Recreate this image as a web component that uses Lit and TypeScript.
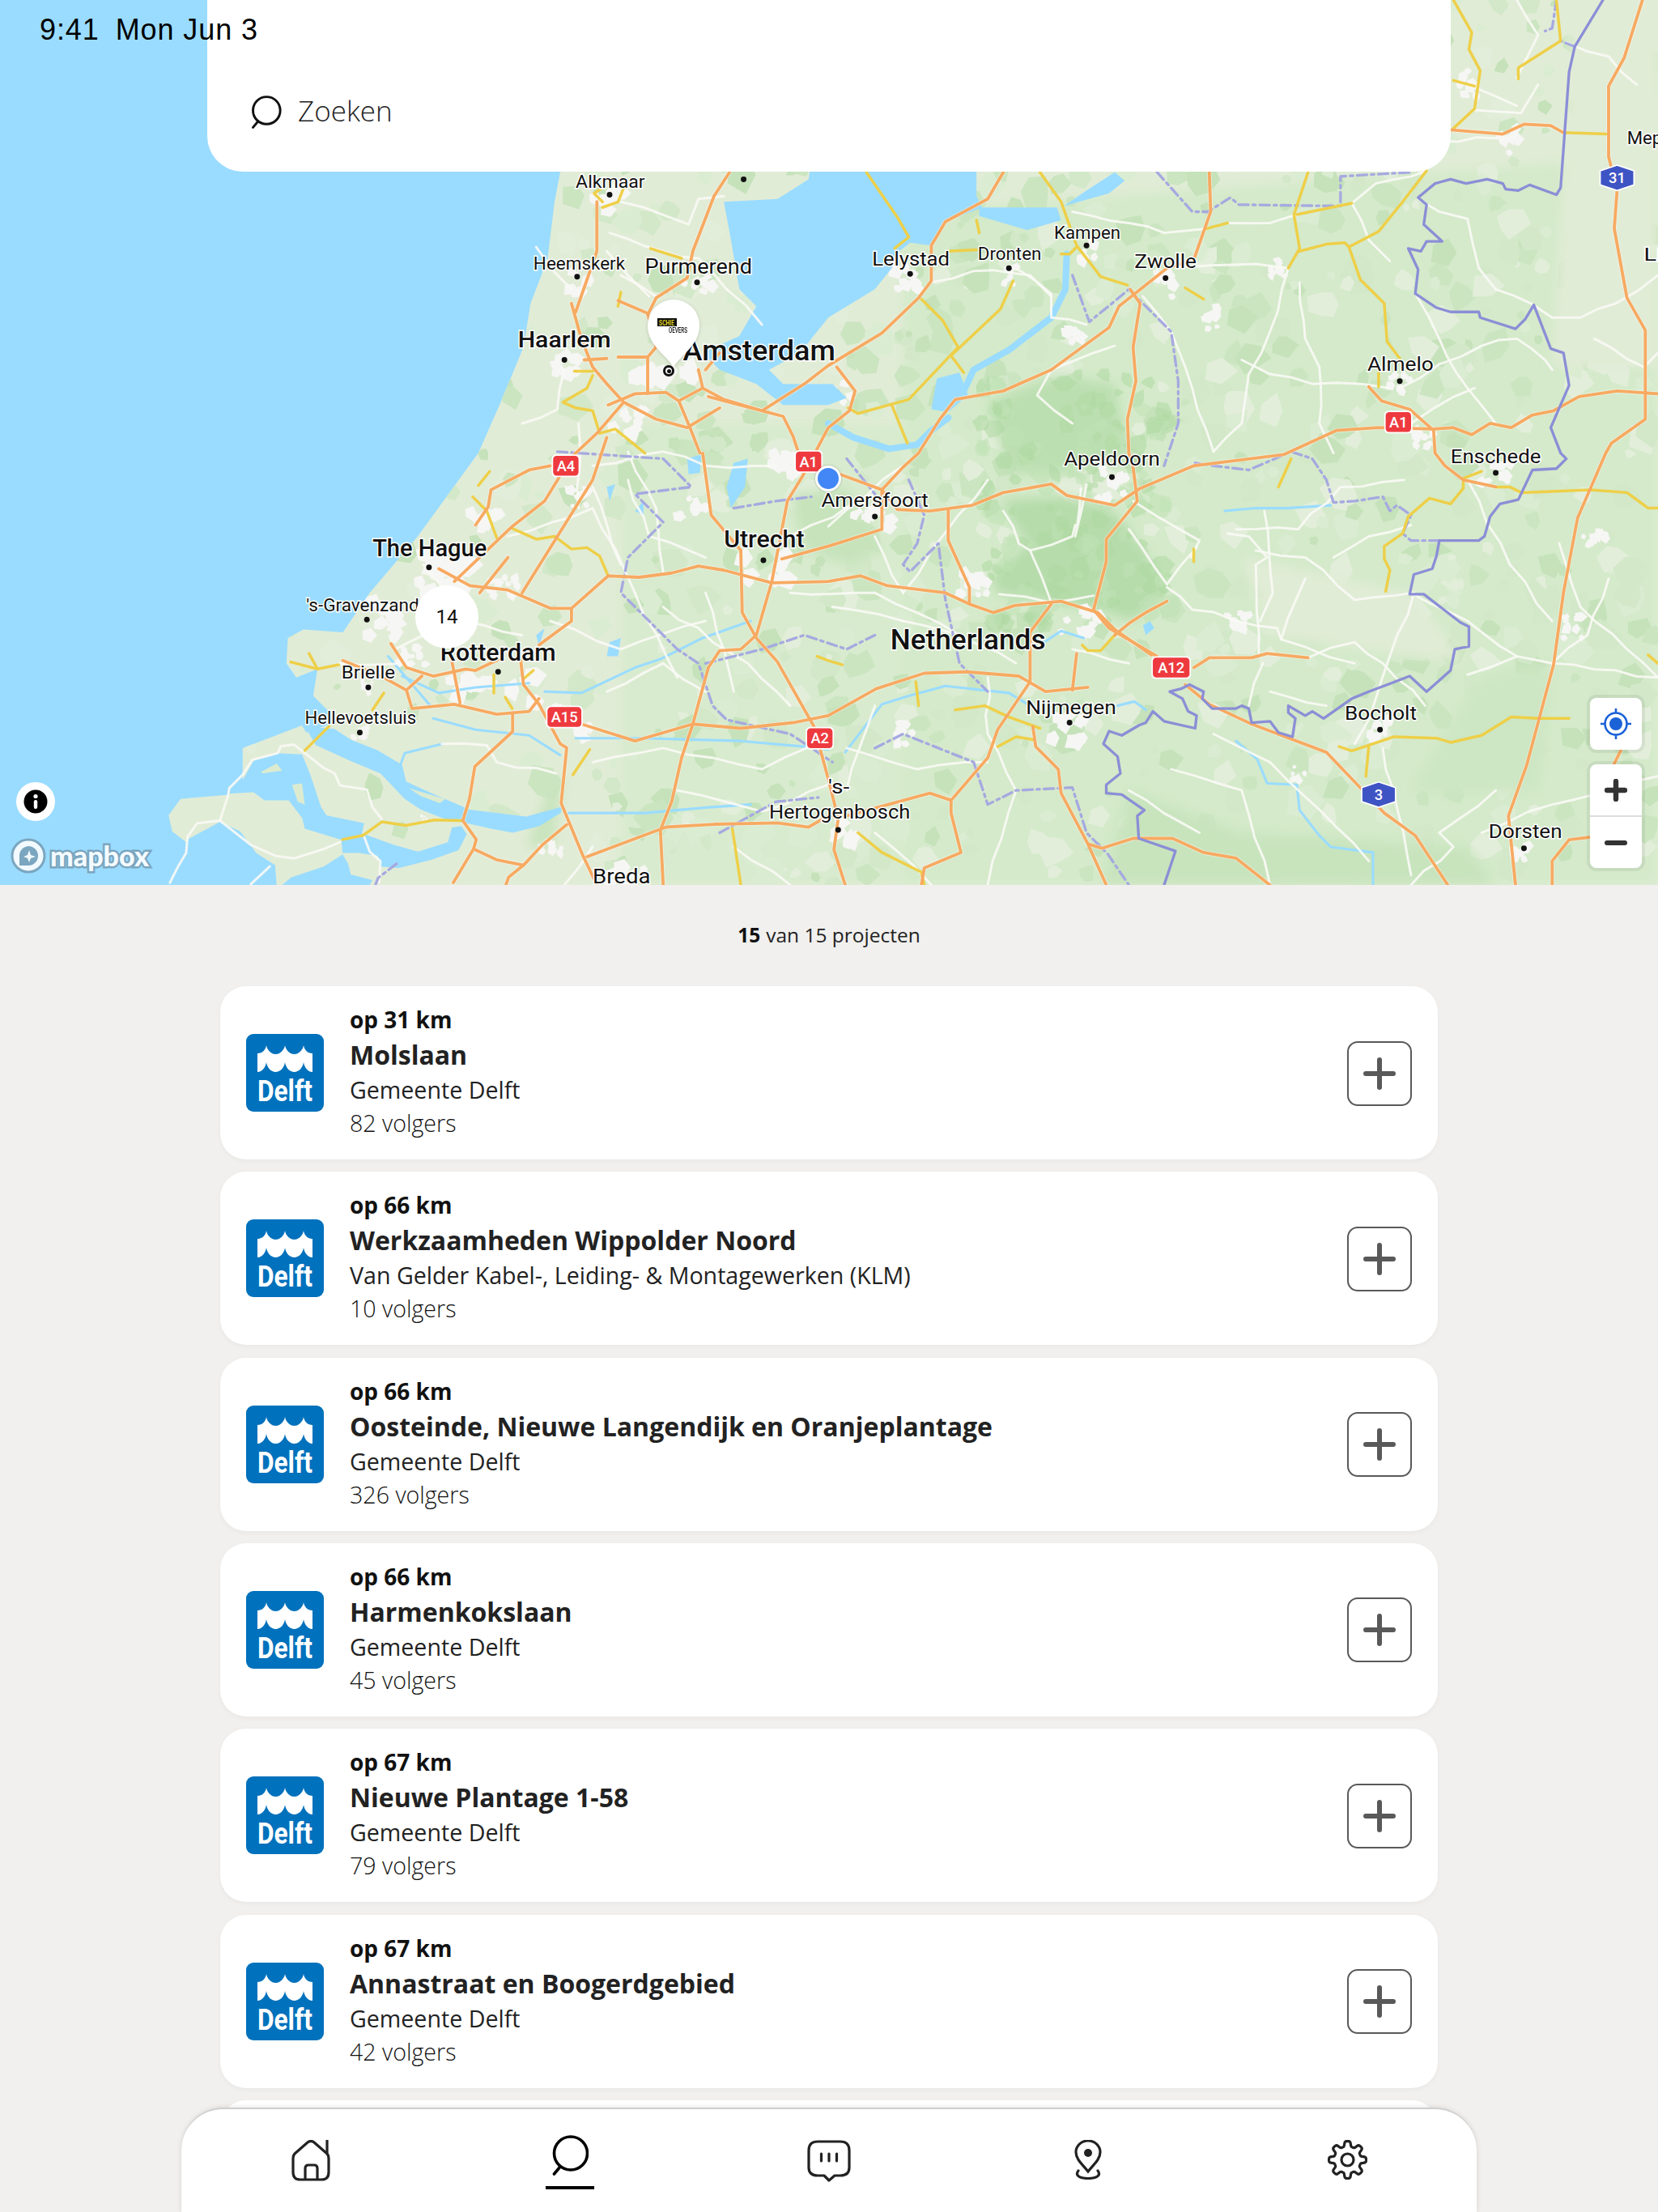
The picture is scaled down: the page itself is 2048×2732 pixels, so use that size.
import { LitElement, html, css, svg } from "lit";
import { customElement } from "lit/decorators.js";

type P = number[][];
const pts = (p: P) => p.map((q) => q.join(",")).join(" ");

function mulberry(a: number) {
  return () => {
    a |= 0; a = (a + 0x6d2b79f5) | 0;
    let t = Math.imul(a ^ (a >>> 15), 1 | a);
    t = (t + Math.imul(t ^ (t >>> 7), 61 | t)) ^ t;
    return ((t ^ (t >>> 14)) >>> 0) / 4294967296;
  };
}

const LAND: P = [[400,0],[1175,0],[1175,627],[132,627],[132,596.7],[122,589],[119.5,577.6],[128,566],[162.5,563],[172,552.7],[172,530],[214,514],[217,519],[240,511],[222,493],[225,474],[210,480],[203,470],[204,452],[215,446],[243,448],[262,420],[296,380],[339,321],[354,287],[371,246],[376,215],[388,184],[393,143],[397,122]];

const WATER: P[] = [
  [[577,100],[692,100],[692,139],[696,147],[670,157],[660,174],[645,172],[635,180],[632,190],[620,205],[587,225],[567,250],[545,262],[555,272],[590,272],[600,282],[587,287],[555,287],[536,272],[510,262],[498,250],[524,238],[536,217],[524,205],[518,170],[513,143],[551,141],[573,127]],
  [[694,147],[749,147],[752,156],[728,163],[694,153]],
  [[754,146],[786,137],[797,128],[790,122],[770,135]],
  [[664,268],[680,264],[686,280],[672,292],[660,290]],
  [[216,514.5],[237,516.4],[248.6,524],[267.7,531.7],[285,542],[287.8,553.7],[306,562],[327,571],[332.7,573.7],[372.9,578.5],[397.7,571.8],[397.7,575.7],[382.4,585.2],[363.3,590],[348,587.1],[330.8,583.3],[315.5,580.4],[298.3,573.7],[286.8,566.1],[269.6,548],[248.6,539.3],[223.7,527.9]],
  [[196.9,533.6],[179.7,539],[172,552.7],[161.5,562.3],[179.7,561.3],[187.4,567],[204.6,567],[214.1,579.5],[216,587.1],[240.9,594.8],[256.2,591.9],[258.1,583.3],[231.4,577.6],[227.5,571.8],[219.9,548.9],[214.1,534.5]],
  [[241.9,595.7],[258.1,591],[279.2,598.6],[296.4,603.4],[317.4,596.7],[320.3,586.2],[327,585.2],[330.8,591],[325,602.4],[306,609.1],[283,614.9],[269.6,613.9],[267.7,606.3],[254.3,604.3],[242.8,604.3]],
  [[130,627],[132.9,594.8],[155.8,582.3],[170.2,589],[181.6,604.3],[195,613],[196,627]],
  [[200,627],[206.5,621.6],[229.4,613.9],[242.8,605.3],[246.7,612],[248.6,619.6],[263.9,623.5],[262,627]],
  [[520,328],[530,325],[528,345],[518,360],[515,345]],
  [[487,325],[497,322],[496,335],[488,336]],
  [[430,345],[436,343],[432,355]],
  [[450,362],[456,355],[456,365]],
  [[432,455],[440,452],[438,465],[430,465]],
  [[380,450],[386,445],[382,458]],
  [[810,443],[815,440],[818,445],[812,450]],
];
const ISLANDS: P[] = [
  [[289.7,558.5],[315.5,566.1],[311.7,569],[298.3,564]],
  [[185,547],[196,541],[200,546],[186,548]],
  [[207,556],[214,555],[216,570],[211,568]],
];

const RIVERS: P[] = [
  [[756,180],[755,205],[745,225],[715,248],[690,262],[683,277]],
  [[672,296],[660,305],[650,315],[630,318],[605,310],[587,300]],
];
const THIN_RIVERS: P[] = [
  [[599,533],[625,499],[644,493],[670,486],[715,491],[730,500]],
  [[386,490],[412,491],[450,473],[468,467],[498,452],[532,440]],
  [[285,479],[311,491],[337,487],[375,484]],
  [[307,509],[337,517],[375,521],[397,535]],
  [[408,523],[456,523],[525,525],[570,529],[587,531]],
  [[403,576],[457,576],[502,572],[532,570]],
  [[876,525],[891,538],[898,555],[919,556],[921,574],[935,592],[943,600],[973,604],[973,627]],
  [[792,500],[804,497],[812,503]],
  [[868,362],[890,360],[912,360],[943,358]],
  [[275,465],[305,500]],
  [[313.6,527],[286.8,533.6],[283,544]],
  [[740,455],[752,447],[768,452]],
];

const WHITE: P[] = [
  [[440,143],[488,159],[495,141],[513,139]],[[432,165],[470,178],[495,183],[515,205]],[[430,178],[445,195],[460,210]],
  [[828,189],[858,188],[890,187],[913,190]],[[760,150],[800,158],[825,165],[855,162]],[[870,158],[900,158],[919,152]],[[958,144],[975,130],[1000,125],[1011,121]],
  [[913,190],[900,235],[885,265],[880,300],[860,320]],[[921,200],[925,240],[935,260],[935,300],[945,321]],[[958,144],[970,170],[985,185]],
  [[1005,141],[1020,150],[1040,155],[1048,190],[1060,205],[1085,215],[1100,225],[1120,225],[1145,215],[1175,195]],
  [[1003,208],[1020,240],[1040,275],[1060,300]],[[880,255],[900,265],[930,272],[965,272],[985,275]],[[992,275],[1020,258],[1050,245],[1075,240],[1095,255],[1100,262]],
  [[1110,30],[1140,40],[1160,60]],[[1075,55],[1090,25],[1075,0]],[[1030,57],[1075,75]],[[1020,100],[1060,98]],[[810,210],[830,235],[840,260],[860,320]],
  [[720,190],[745,208],[745,225],[770,230]],[[790,245],[745,262],[735,280],[760,300]],[[660,200],[690,192],[730,195],[745,210]],
  [[1090,60],[1078,80],[1045,78]],[[1000,300],[1015,290],[1045,275]],[[1130,240],[1165,260],[1175,250]],
  [[587,373],[640,330]],
  [[711,362],[722,385],[730,390],[745,427]],[[766,346],[765,360],[763,375],[762,380],[770,343]],[[730,390],[760,380],[762,372]],[[708,421],[745,427],[775,422]],[[803,355],[836,375],[850,383],[844,395]],
  [[800,375],[827,414],[848,388]],[[827,416],[845,432],[905,445],[908,453],[960,470]],[[896,362],[902,420],[893,440]],[[876,375],[920,375],[950,345],[995,340]],
  [[870,378],[885,380],[898,395],[890,400],[892,465]],[[890,390],[925,395],[960,425],[1002,420]],[[945,395],[970,380],[1000,372]],[[925,410],[908,453]],
  [[1002,420],[970,510],[960,527]],[[1175,480],[1100,470],[1075,465],[1040,478]],[[1140,410],[1125,450],[1100,470]],[[1040,340],[1070,400],[1100,440]],[[1000,420],[1040,440],[1075,465]],
  [[860,520],[900,540],[970,610]],[[980,530],[1000,620]],[[1060,560],[1020,590],[1030,600],[1000,627]],[[1175,550],[1100,570],[1050,590]],[[1105,385],[1120,430],[1175,480]],[[927,466],[960,455],[980,470],[1010,500]],[[895,470],[885,500]],[[900,490],[940,500]],
  [[700,480],[700,520],[720,560],[700,627]],[[620,500],[600,560]],[[800,470],[760,460]],[[830,545],[880,560],[900,627]],[[800,560],[850,590]],
  [[640,420],[660,390],[700,340]],[[640,440],[680,450],[720,470]],[[590,430],[640,440]],[[620,380],[640,420]],[[560,380],[620,350]],
  [[420,330],[470,320],[500,330],[550,330]],[[420,345],[440,400]],[[450,420],[480,480]],[[500,420],[520,490]],[[560,420],[620,420],[680,450]],[[360,380],[420,360],[450,420]],[[390,440],[440,460],[500,440]],[[470,430],[530,470],[560,500]],
  [[410,300],[410,360]],[[445,320],[465,360],[470,405]],[[430,490],[470,470],[500,490]],[[420,540],[470,530],[540,545],[590,520]],[[480,560],[540,575],[590,555]],[[520,600],[560,627]],[[600,530],[650,545],[700,540]],[[620,590],[660,627]],[[420,600],[400,627]],
  [[280,460],[300,450],[320,430]],[[300,400],[330,440],[370,450]],[[240,470],[290,470]],[[313,527],[345,528],[352,540],[394,548]],
  [[380,175],[405,205]],[[440,195],[465,210]],[[400,262],[395,290],[370,300]],[[500,395],[460,380],[445,340]],[[515,205],[540,230]],
];
const WHITE_EXACT: P[] = [
  [[120.4,625.4],[126.2,613.9],[131.9,604.3],[132.9,592.9],[139.6,583.3],[155.8,581.4],[177.8,598.6],[195,606.3],[208.4,608.2],[229.4,601.5],[241,596.7]],
  [[155.8,581.4],[161.5,564.2],[162.5,558.4],[172,548.9],[178.8,538.4],[196.9,533.6],[198.9,528.8],[208.4,527.5],[229.4,544.1],[237.1,547.9],[240.9,556.5],[260,559.4],[263.9,571.8],[270.6,580.4]],
  [[258.1,592.9],[262,603.4],[269.6,610.1],[268.7,625.4]],
  [[191.2,613.9],[177.8,626.4]],
];

const ORANGE: P[] = [
  [[857,122],[858,150],[846,184],[827,190],[793,217],[786,232],[745,262],[711,277],[677,283],[666,297],[651,321],[640,331],[625,347],[625,375],[587,387],[554,396]],
  [[711,122],[700,141],[670,157],[660,174],[660,199],[651,211],[625,236],[587,259],[570,272],[540,291],[502,281]],
  [[801,205],[808,215],[803,246],[805,270],[799,297],[800,321],[803,331],[806,355],[784,382],[784,398],[775,432],[786,445],[820,465]],
  [[540,291],[555,295],[562,309],[566,321],[573,327],[587,333],[625,347],[636,361],[659,362],[689,358],[711,349],[745,343],[756,351],[790,358],[808,346],[846,330],[910,322],[947,305],[977,303],[1016,304],[1030,303],[1043,308],[1056,300],[1071,303],[1086,294],[1101,291],[1119,281],[1146,277],[1175,279]],
  [[970,274],[979,284],[999,290],[1016,305],[1017,321],[1024,330],[1037,340],[1060,345]],
  [[1164,0],[1151,41],[1140,61],[1140,111],[1146,135],[1144,162],[1153,211],[1166,234],[1166,297],[1142,314],[1138,321],[1118,367],[1108,420],[1101,471],[1082,542],[1069,578],[1074,627]],
  [[1028,92],[1065,95],[1080,88],[1099,89],[1108,94]],
  [[593,260],[606,277],[602,291],[587,303],[569,337],[558,355],[547,412],[536,450],[525,460],[510,461],[502,473],[491,513],[483,537],[476,568],[468,588],[470,627]],
  [[498,321],[504,365],[525,390],[526,434],[536,452],[551,469],[577,515],[587,552],[594,580],[591,602],[599,627]],
  [[311,403],[333,415],[360,418],[390,431],[405,431],[431,408],[453,409],[476,406],[495,401],[513,404],[547,413],[587,412],[610,408],[629,415],[670,420],[687,428],[704,434],[719,429],[752,426],[778,434],[790,446],[816,464]],
  [[390,330],[375,333],[348,347],[346,359],[337,372]],[[397,337],[386,355],[363,373],[322,412]],[[405,431],[405,440],[382,457]],[[369,468],[371,485],[382,499]],
  [[277,456],[288,473],[307,479],[330,474],[337,475],[356,466]],[[243,468],[270,479],[288,489],[292,502],[322,499],[352,506],[375,504],[382,495]],[[288,489],[299,479]],[[320,467],[326,498]],
  [[412,513],[450,525],[491,513],[525,516],[562,512],[587,507],[621,488],[655,477],[685,476],[722,479],[741,490],[771,487]],
  [[382,499],[397,527],[401.6,529.8],[397.7,569],[413,606],[423,627]],
  [[363.3,505],[363.3,518.3],[336.5,543.1],[332.7,566.1],[328,581.4],[337.5,594.8],[335.6,601.5],[321.2,625.4]],
  [[335.6,601.5],[351.8,609.1],[371,613],[384.4,598.6],[401.6,584.3]],[[371,613],[360.4,621.6],[358.5,627]],
  [[416,607],[472,586],[506,584],[551,583],[573,586],[587,578],[600,578],[659,562],[674,567],[700,537],[707,517],[730,483]],[[674,567],[674,576],[681,604],[655,615],[653,627]],
  [[732,515],[734,529],[750,545],[752,562],[771,598],[784,627]],[[771,598],[781,601],[803,594],[831,594],[853,604],[876,608],[900,627]],
  [[745,428],[730,448],[730,483]],[[763,463],[760,489]],[[846,473],[857,466],[887,466],[898,463],[927,466]],
  [[840,485],[857,499],[887,513],[940,533],[962,556],[981,576],[1003,592],[1026,627]],[[672,361],[672,383],[687,416],[687,428]],[[827,426],[812,434],[801,441],[790,450]],
  [[1100,627],[1100,610],[1112,595],[1128,593]],[[1149,531],[1142,545]],
  [[423,143],[423,178],[408,221]],[[517,122],[506,139],[491,178],[487,197],[465,211],[459,223]],[[438,213],[459,222],[465,246]],
  [[405,215],[412,240],[420,260],[431,273],[442,285],[423,307],[408,321],[395,335]],[[438,253],[459,253],[465,246]],[[459,253],[459,279]],
  [[431,287],[450,279],[472,278],[481,284],[498,275],[495,262]],[[498,275],[513,283],[540,291]],[[442,285],[465,297],[487,303],[510,289]],[[481,284],[489,303],[496,321]],
  [[414,255],[430,254]],[[430,310],[420,340],[395,380],[370,420]],[[500,262],[510,250]],[[360,395],[340,420]],
];

const YELLOW: P[] = [
  [[427,143],[421,137],[427,133]],[[442,133],[438,143],[427,147]],[[461,176],[483,183]],[[440,207],[438,217]],[[407,263],[420,263]],[[420,266],[416,275],[399,285],[408,289],[420,291],[425,307],[436,304],[457,321]],
  [[614,122],[636,154],[644,168],[634,176]],[[672,178],[692,177]],[[692,156],[694,165]],[[737,122],[752,143],[763,174],[780,196],[799,202]],[[752,180],[758,180],[763,175]],
  [[653,212],[668,227],[679,246],[644,283],[608,293],[601,289]],[[718,199],[709,219],[674,252],[683,264]],[[840,204],[853,212]],[[632,287],[643,314]],[[855,162],[870,158]],[[919,152],[958,144]],
  [[927,122],[917,152],[921,176],[913,190]],[[921,178],[940,173],[953,172],[956,175],[977,164],[994,143],[1011,121]],[[956,175],[964,198],[981,215],[983,242],[992,254]],[[977,264],[977,274]],
  [[1030,0],[1043,23],[1041,35],[1049,50],[1045,77],[1030,91]],[[1030,57],[1045,61]],[[1076,56],[1076,48],[1106,29],[1103,0]],[[1108,94],[1138,95]],
  [[906,345],[915,325]],[[846,389],[846,398]],[[1037,346],[1028,357],[1013,353],[998,366],[994,378],[981,387],[981,396],[985,404],[982,419]],[[1037,346],[1037,339],[1050,334]],
  [[1060,345],[1070,345],[1078,349],[1127,347],[1153,349],[1168,360],[1175,360]],[[949,529],[958,532],[988,522],[1018,523],[1028,526],[1050,521],[1071,508],[1090,509],[1112,509]],[[970,529],[968,550]],
  [[767,457],[771,461],[780,461],[790,450]],[[649,483],[651,500]],[[677,503],[698,500],[715,508],[737,516]],[[707,529],[720,522],[732,524]],[[608,590],[625,604],[653,618],[655,627]],
  [[347,334],[339,344]],[[335,352],[345,362],[352,381]],[[362,374],[380,382],[393,380],[405,389],[416,388],[425,394],[431,408]],[[206,469],[225,474],[240,471]],[[219,463],[225,474]],
  [[272,491],[264,503]],[[216,531.7],[233.3,514.5]],[[350,478],[350,491]],[[358,494],[363,502]],[[418,531],[406,549]],
  [[242.8,594.8],[257.2,591.9],[270.6,582.3],[287.8,584.8],[307.8,581],[327,581.4]],[[519,587],[525,627]],[[371,481],[378,475]],[[579,465],[587,468],[597,471]],[[1175,470],[1168,464]],
];

const BORDER: P = [[1136,0],[1116,33],[1112,51],[1106,133],[1103,138],[1084,131],[1076,135],[1067,134],[1065,130],[1054,127],[1039,130],[1028,127],[1017,130],[1005,140],[1011,145],[1009,159],[1022,171],[1011,171],[1007,178],[998,176],[1005,191],[1003,208],[1018,218],[1028,221],[1048,221],[1049,225],[1074,233],[1081,226],[1087,216],[1099,247],[1108,250],[1112,273],[1099,303],[1106,321],[1110,325],[1103,332],[1086,333],[1076,354],[1063,357],[1056,366],[1052,380],[1048,383],[1020,383],[1018,394],[1015,403],[1002,407],[999,421],[1009,421],[1035,441],[1041,444],[1041,458],[1031,460],[1028,475],[1011,490],[999,479],[986,484],[970,490],[958,495],[938,509],[930,504],[925,507],[913,500],[913,505],[918,509],[916,522],[906,519],[900,511],[887,512],[885,502],[880,500],[876,502],[859,502],[852,495],[853,490],[843,485],[837,488],[829,490],[838,495],[842,504],[848,507],[847,516],[825,511],[817,504],[812,512],[807,514],[795,521],[786,518],[782,527],[792,536],[794,548],[784,556],[784,562],[795,563],[811,574],[806,578],[807,594],[833,603],[825,627]];

const DASHED: P[] = [
  [[1103,0],[1100,20],[1095,22]],[[1116,33],[1106,29]],[[1020,383],[1000,383],[994,378],[1000,365],[990,358],[985,362],[980,352],[960,355],[945,356],[940,340],[930,325],[915,320],[885,333],[860,330],[847,328]],
  [[760,195],[772,228],[788,215],[800,205]],[[800,205],[830,235],[835,270],[835,300],[825,330]],[[820,122],[845,150],[856,150],[872,140],[878,145],[950,146],[950,125],[1000,122]],
  [[644,340],[655,365],[650,385],[640,400],[645,405],[665,385],[670,425],[680,470],[700,490]],[[600,325],[620,350]],
  [[395,320],[470,325],[490,345],[450,350],[470,370],[445,395],[440,420],[460,440],[480,460],[495,470],[505,500],[515,510],[560,520],[590,540]],
  [[520,360],[550,355],[575,352]],[[500,470],[540,460],[570,450],[600,460],[620,450]],[[620,530],[640,520],[665,530],[690,540],[700,570],[720,560],[760,558],[770,590],[785,605],[800,627]],
  [[510,590],[550,568],[580,565]],[[281,612],[268,622],[266,627]],
];

const BASES: { f: string; p: P }[] = [
  { f: "#d4eaca", p: [[640,150],[1175,110],[1175,627],[640,627]] },
  { f: "#d8ebce", p: [[440,300],[640,300],[640,627],[440,627]] },
];
const FIELDS: { f: string; p: P }[] = [
  { f: "#b6dcab", p: [[713,354],[753.5,352],[784,359.5],[795.6,369],[822,407.3],[824,420.7],[803,440],[778,432],[746,426],[708,421],[702,409],[721,392],[729,386],[713,363]] },
  { f: "#bcdfb1", p: [[700,285],[750,266],[790,272],[800,322],[760,335],[715,335]] },
  { f: "#c6e3bb", p: [[560,350],[600,345],[625,390],[600,400],[570,390]] },
  { f: "#c8e4bd", p: [[800,560],[880,590],[1040,600],[1060,627],[780,627]] },
  { f: "#e1ecd6", p: [[880,395],[1000,420],[1040,470],[900,450]] },
  { f: "#cde6c3", p: [[1050,480],[1100,470],[1090,560],[1000,560]] },
  { f: "#e1ecd6", p: [[1115,0],[1175,0],[1175,260],[1100,260]] },
  { f: "#c9e4be", p: [[373,600],[388,560],[400,550],[392,600]] },
];

const CITIES: number[][] = [[432,140,14,10],[494,202,12,8],[410,200,10,10],[400,258,14,10],[474,272,28,16],[445,300,16,12],[592,278,14,8],[645,198,12,10],[715,195,6,8],[770,178,8,8],[826,202,10,12],[618,368,16,10],[540,402,22,14],[310,410,28,22],[355,415,14,8],[352,488,40,14],[395,505,10,8],[345,372,14,10],[788,342,12,16],[765,440,16,10],[755,515,16,12],[860,225,8,10],[1060,335,14,8],[992,272,10,8],[594,590,16,10],[445,622,24,10],[555,330,10,10],[690,415,12,10],[270,440,16,16],[290,465,14,8],[978,517,8,8],[1080,605,8,8],[905,190,6,8],[760,240,8,8],[880,440,12,8],[1010,310,10,8],[1130,380,10,8],[1115,445,8,12],[1140,520,10,8],[920,550,6,8],[640,520,8,10],[490,360,12,8],[415,520,8,8],[410,352,8,8],[1070,100,8,10],[1040,60,8,12],[255,520,6,5],[261,487,6,5],[390,600,10,6],[300,580,3,3]];

const DOTS = [[432,138],[527,127],[409,196],[494,200],[400,255],[645,194],[715,190],[770,174],[826,197],[992,270],[1060,335],[788,338],[620,366],[541,397],[304,402],[260,439],[353,476],[261,487],[255,519],[758,512],[978,517],[594,588],[1080,601]];

const LABELS: [string, number, number, number, number, number][] = [
  ["Alkmaar",408,457,133,13,400],["Heemskerk",378,443,191,13,400],["Purmerend",457,533,194,14.5,400],["Haarlem",367,433,246,16,500],["Amsterdam",484,592,255,20,500],
  ["Lelystad",618,673,188,14,400],["Dronten",693,738,184,13,400],["Kampen",747,794,169,13,400],["Zwolle",804,848,190,14,400],["Almelo",969,1016,263,14,400],["Mep",1153,1178,102,13,400],["Li",1165,1178,185,13,400],
  ["Enschede",1028,1092,328,14,400],["Apeldoorn",754,822,330,14,400],["Amersfoort",582,658,359,14,400],["Utrecht",513,570,388,17,500],["The Hague",264,345,394,16.5,500],["'s-Gravenzand",217,297,433,12.5,400],
  ["Rotterdam",312,394,468,17,500],["Brielle",242,280,481,13,400],["Hellevoetsluis",216,295,513,13,400],["Netherlands",631,741,460,20,500],["Nijmegen",727,791,506,14,400],["Bocholt",953,1004,510,14,400],
  ["'s-",587,602,562,13.5,400],["Hertogenbosch",545,645,580,14,400],["Breda",420,461,626,15,400],["Dorsten",1055,1107,594,14,400],
];

const RED: [string, number, number, number][] = [["A1",573,327,18],["A4",401,330,18],["A1",991,299,18],["A15",400,508,24],["A2",581,523,18],["A12",830,473,26]];
const BLUE: [string, number, number][] = [["31",1146,126],["3",977,563]];

function poly(r: () => number, x: number, y: number, rad: number, n: number) {
  const q: number[][] = [];
  for (let k = 0; k < n; k++) {
    const a = (k / n) * Math.PI * 2, d = rad * (0.55 + r() * 0.6);
    q.push([+(x + Math.cos(a) * d).toFixed(1), +(y + Math.sin(a) * d).toFixed(1)]);
  }
  return pts(q);
}
function blobs() {
  const r = mulberry(7);
  const out: { p: string; f: string }[] = [];
  const pal = ["#d2e8c8", "#cbe5c1", "#daecd1", "#e2eeda", "#c5e2ba"];
  for (let i = 0; i < 1300; i++) {
    const x = 120 + r() * 1055, y = r() * 627;
    if (x < 420 && y > 500 && r() < 0.85) continue;
    if (x < 420 && y > 330 && r() < 0.4) continue;
    out.push({ p: poly(r, x, y, 3 + r() * 11, 5 + Math.floor(r() * 3)), f: pal[Math.floor(r() * pal.length)] });
  }
  return out;
}
function mottle() {
  const r = mulberry(23);
  const out: { p: string; f: string }[] = [];
  for (let i = 0; i < 150; i++) {
    const x = 695 + r() * 135, y = 262 + r() * 180;
    out.push({ p: poly(r, x, y, 3 + r() * 7, 6), f: r() > 0.5 ? "#aed8a3" : "#c0e1b5" });
  }
  return out;
}
function urban() {
  const r = mulberry(3);
  const out: string[] = [];
  for (const c of CITIES) {
    for (let i = 0; i < 10; i++) {
      const x = c[0] + (r() - 0.5) * c[2] * 1.7, y = c[1] + (r() - 0.5) * c[3] * 1.7;
      out.push(poly(r, x, y, Math.min(c[2], c[3]) * (0.3 + r() * 0.35), 5));
    }
  }
  return out;
}
function wiggle(list: P[]): P[] {
  const r = mulberry(19);
  return list.map((line) => {
    const o: P = [line[0]];
    for (let i = 1; i < line.length; i++) {
      const [ax, ay] = line[i - 1], [bx, by] = line[i];
      const len = Math.hypot(bx - ax, by - ay), n = Math.max(1, Math.round(len / 16));
      for (let k = 1; k <= n; k++) {
        const t = k / n, j = k === n ? 0 : (r() - 0.5) * 3.2;
        o.push([+(ax + (bx - ax) * t + (-(by - ay) / len) * j).toFixed(1), +(ay + (by - ay) * t + ((bx - ax) / len) * j).toFixed(1)]);
      }
    }
    return o;
  });
}
const BL = blobs(), MT = mottle(), UB = urban(), WH = wiggle(WHITE);

function gearPath() {
  const c = 24.5; const d: string[] = [];
  for (let i = 0; i < 160; i++) {
    const t = (i / 160) * Math.PI * 2;
    const s = Math.tanh(Math.cos(8 * t) * 2.2) / Math.tanh(2.2);
    const rr = 19.8 + 3.2 * s;
    d.push(`${(c + Math.sin(t) * rr).toFixed(2)} ${(c - Math.cos(t) * rr).toFixed(2)}`);
  }
  return "M" + d.join("L") + "Z";
}

const ITEMS = [
  ["op 31 km", "Molslaan", "Gemeente Delft", "82 volgers"],
  ["op 66 km", "Werkzaamheden Wippolder Noord", "Van Gelder Kabel-, Leiding- & Montagewerken (KLM)", "10 volgers"],
  ["op 66 km", "Oosteinde, Nieuwe Langendijk en Oranjeplantage", "Gemeente Delft", "326 volgers"],
  ["op 66 km", "Harmenkokslaan", "Gemeente Delft", "45 volgers"],
  ["op 67 km", "Nieuwe Plantage 1-58", "Gemeente Delft", "79 volgers"],
  ["op 67 km", "Annastraat en Boogerdgebied", "Gemeente Delft", "42 volgers"],
];

const searchIcon = (cls: string) => html`<svg class=${cls} viewBox="0 0 46 50" fill="none" stroke="currentColor" stroke-width="3.6" stroke-linecap="round"><circle cx="24" cy="22.5" r="20.5"/><path d="M11 39 L3.5 48"/></svg>`;

@customElement("app-root")
export class AppRoot extends LitElement {
  static styles = css`
    :host { display: block; position: relative; width: 2048px; height: 2732px; overflow: hidden; background: #f1f0ee; font-family: "Open Sans", sans-serif; color: #222; }
    .status { position: absolute; left: 49px; top: 15px; display: flex; gap: 20px; z-index: 5; font: 36px/44px "Liberation Sans", sans-serif; color: #000; letter-spacing: 0.9px; }
    .map { position: relative; height: 1093px; background: #9adcff; overflow: hidden; }
    .mapsvg { display: block; width: 2048px; height: 1093px; }
    .r { fill: none; stroke-linejoin: round; stroke-linecap: round; }
    .rw { stroke: #f9faf5; stroke-width: 1.7; opacity: .9; }
    .rc { stroke: #ffffff; stroke-width: 3.2; opacity: .45; }
    .ro { stroke: #f7aa62; stroke-width: 2.2; }
    .ry { stroke: #eecf48; stroke-width: 2; }
    .rb { stroke: #8b8ed6; stroke-width: 1.9; }
    .rd { stroke: #a6a9e0; stroke-width: 1.9; stroke-dasharray: 7 3 2 3; }
    .rh { stroke: #9adcff; stroke-width: 4.6; }
    .rt { stroke: #9adcff; stroke-width: 1.8; }
    .lb { font-family: "Roboto", sans-serif; fill: #111; stroke: #fff; stroke-width: 1.6; paint-order: stroke; }
    .shield { font-family: "Roboto", sans-serif; font-weight: 500; font-size: 10.5px; fill: #fff; text-anchor: middle; }
    .search { position: absolute; left: 256px; top: 0; width: 1536px; height: 212px; background: #fff; border-radius: 0 0 44px 44px; box-sizing: border-box; padding: 0 0 50px 53px; display: flex; align-items: flex-end; gap: 20px; font-size: 35px; line-height: 50px; color: #222; font-weight: 300; }
    .search-icon { width: 39px; height: 41px; color: #111; margin-bottom: 3px; }
    .pin { position: absolute; left: 798px; top: 368px; width: 68px; height: 90px; filter: drop-shadow(0 1px 2px rgba(0,0,0,.15)); }
    .cluster { position: absolute; left: 513px; top: 723px; width: 78px; height: 78px; border-radius: 50%; background: #fff; display: flex; align-items: center; justify-content: center; font: 24px "Roboto", sans-serif; color: #111; }
    .ring { position: absolute; left: 819px; top: 451px; width: 8px; height: 8px; border: 3.5px solid #111; border-radius: 50%; background: #fff; display: flex; align-items: center; justify-content: center; }
    .ring::after { content: ""; display: block; width: 5px; height: 5px; border-radius: 50%; background: #111; }
    .me { position: absolute; left: 1007px; top: 575px; width: 26px; height: 26px; border-radius: 50%; background: #4287f5; border: 3px solid #fff; box-shadow: 0 0 3px rgba(0,0,0,.25); }
    .ctl { position: absolute; left: 1964px; width: 64px; background: #fff; border-radius: 8px; box-shadow: 0 0 0 4px rgba(0,0,0,.06); overflow: hidden; }
    .geo { top: 862px; height: 64px; display: flex; align-items: center; justify-content: center; }
    .zoom { top: 944px; height: 128px; display: flex; flex-direction: column; }
    .zoom div { flex: 1; display: flex; align-items: center; justify-content: center; }
    .zoom div + div { border-top: 2px solid #ddd; }
    .ctl svg { display: block; }
    .info { position: absolute; left: 20px; top: 966px; width: 48px; height: 48px; border-radius: 50%; background: #fff; display: flex; align-items: center; justify-content: center; }
    .mbx { position: absolute; left: 12px; top: 1032px; width: 180px; height: 52px; }
    .mbxt { font-family: "Lato", sans-serif; font-weight: 900; font-size: 35px; fill: #f4fbff; stroke: #7ba6bf; stroke-width: 5px; paint-order: stroke; }
    .logo-t { font-family: "Roboto", sans-serif; font-weight: 700; font-size: 36px; fill: #fff; }
    .pintext-a { font-family: "Roboto", sans-serif; font-weight: 700; font-size: 9px; fill: #e6d21e; }
    .pintext-b { font-family: "Roboto", sans-serif; font-weight: 500; font-size: 9px; fill: #111; }
    .count { height: 125px; box-sizing: border-box; padding-bottom: 2px; display: flex; align-items: center; justify-content: center; gap: 7px; font-size: 24.5px; color: #222; }
    .count b { font-weight: 700; color: #111; }
    .list { display: flex; flex-direction: column; gap: 15.33px; padding: 0 272px; }
    .card { height: 214px; box-sizing: border-box; flex: none; background: #fff; border-radius: 32px; box-shadow: 0 2px 6px rgba(0,0,0,.04); display: flex; align-items: center; padding: 0 32px; gap: 32px; }
    .logo { width: 96px; height: 96px; flex: none; display: block; }
    .body { flex: 1; display: flex; flex-direction: column; color: #222; font-size: 28.6px; line-height: 41px; margin-bottom: 5px; }
    .dist { font-weight: 700; font-size: 28px; color: #111; line-height: 43px; }
    .title { font-weight: 700; font-size: 32px; line-height: 44px; color: #222; }
    .foll { font-weight: 300; color: #111; }
    .add { width: 80px; height: 80px; flex: none; box-sizing: border-box; border: 2px solid #595959; border-radius: 13px; margin-top: 1px; display: flex; align-items: center; justify-content: center; }
    .nav { position: absolute; left: 224px; top: 2603px; width: 1600px; height: 129px; box-sizing: border-box; background: #fff; border-top: 2px solid #cfcfcf; border-radius: 52px 52px 0 0; box-shadow: 0 0 6px rgba(0,0,0,.12); display: grid; grid-template-columns: repeat(5, 1fr); z-index: 4; }
    .tab { position: relative; display: flex; justify-content: center; align-items: flex-start; padding-top: 38px; color: #222; }
    .tab.on { padding-top: 32px; color: #000; }
    .tab.on::after { content: ""; position: absolute; left: 130px; top: 95px; width: 60px; height: 4px; background: #000; }
    .tab-s { width: 46px; height: 50px; }
  `;

  private line(list: P[], cls: string) {
    return list.map((p) => svg`<polyline class="r ${cls}" points=${pts(p)}/>`);
  }

  private map() {
    return html`<svg class="mapsvg" viewBox="0 0 1175 627" preserveAspectRatio="none">
      <defs>
        <clipPath id="land"><polygon points=${pts(LAND)}/></clipPath>
        <filter id="soft" x="-5%" y="-5%" width="110%" height="110%"><feGaussianBlur stdDeviation="4"/></filter>
      </defs>
      <g clip-path="url(#land)">
        <rect width="1175" height="627" fill="#e1ecd6"/>
        <g filter="url(#soft)">${BASES.map((b) => svg`<polygon points=${pts(b.p)} fill=${b.f}/>`)}</g>
        ${BL.map((b) => svg`<polygon points=${b.p} fill=${b.f}/>`)}
        <g filter="url(#soft)">${FIELDS.map((b) => svg`<polygon points=${pts(b.p)} fill=${b.f}/>`)}</g>
        ${MT.map((b) => svg`<polygon points=${b.p} fill=${b.f} opacity=".55"/>`)}
        ${UB.map((u) => svg`<polygon points=${u} fill="#f6f6f4"/>`)}
      </g>
      ${WATER.map((w) => svg`<polygon points=${pts(w)} fill="#9adcff"/>`)}
      ${ISLANDS.map((w) => svg`<polygon points=${pts(w)} fill="#dcebd0"/>`)}
      ${this.line(RIVERS, "rh")}${this.line(THIN_RIVERS, "rt")}
      ${this.line(WH, "rw")}${this.line(WHITE_EXACT, "rw")}
      ${this.line(DASHED, "rd")}
      ${this.line(ORANGE, "rc")}
      ${this.line(YELLOW, "ry")}
      ${this.line(ORANGE, "ro")}
      <polyline class="r rb" points=${pts(BORDER)}/>
      ${DOTS.map((d) => svg`<circle cx=${d[0]} cy=${d[1]} r="2" fill="#111"/>`)}
      ${LABELS.map((l) => svg`<text class="lb" x=${l[1]} y=${l[3]} font-size=${l[4]} font-weight=${l[5]} textLength=${l[2] - l[1]} lengthAdjust="spacingAndGlyphs">${l[0]}</text>`)}
      ${RED.map((s) => svg`<rect x=${s[1] - s[3] / 2 - 1} y=${s[2] - 8} width=${s[3] + 2} height="16" rx="3" fill="#fff"/><rect x=${s[1] - s[3] / 2} y=${s[2] - 7} width=${s[3]} height="14" rx="2.5" fill="#ee3a3f"/><text class="shield" x=${s[1]} y=${s[2] + 3.8}>${s[0]}</text>`)}
      ${BLUE.map((s) => svg`<polygon points=${`${s[1] - 12},${s[2] - 5} ${s[1]},${s[2] - 9} ${s[1] + 12},${s[2] - 5} ${s[1] + 12},${s[2] + 5} ${s[1]},${s[2] + 9} ${s[1] - 12},${s[2] + 5}`} fill="#3f54c4" stroke="#fff" stroke-width="1" stroke-linejoin="round"/><text class="shield" x=${s[1]} y=${s[2] + 3.8}>${s[0]}</text>`)}
    </svg>`;
  }

  private logo() {
    return html`<svg class="logo" viewBox="0 0 96 96">
      <rect width="96" height="96" rx="9" fill="#0071bc"/>
      <path fill="#fff" d="M14 24C20 24 24 20 25 14C26 20 31 25 36.5 25C42 25 47 20 48 14C49 20 54 25 59.5 25C65 25 70 20 71 14C72 20 76 24 82 24L82 47C76 47 72 41 71 35C70 42 65 47 59.5 47C54 47 49 42 48 35C47 42 42 47 36.5 47C31 47 26 42 25 35C24 41 20 47 14 47Z"/>
      <text class="logo-t" x="14" y="83" textLength="68" lengthAdjust="spacingAndGlyphs">Delft</text>
    </svg>`;
  }

  render() {
    return html`
      <div class="status"><span>9:41</span><span>Mon Jun 3</span></div>
      <section class="map">
        ${this.map()}
        <div class="cluster">14</div>
        <div class="ring"></div>
        <svg class="pin" viewBox="0 0 68 90">
          <path fill="#fff" d="M34 86C28 72 2 60 2 34A32 32 0 0 1 66 34C66 60 40 72 34 86Z"/>
          <rect x="14" y="25" width="24" height="10" fill="#111"/>
          <text class="pintext-a" x="16" y="34" textLength="19" lengthAdjust="spacingAndGlyphs">SCHIE</text>
          <text class="pintext-b" x="28" y="43" textLength="23" lengthAdjust="spacingAndGlyphs">OEVERS</text>
        </svg>
        <div class="me"></div>
        <div class="ctl geo"><svg width="40" height="40" viewBox="0 0 40 40" fill="none" stroke="#1a62d6" stroke-width="2.6"><circle cx="20" cy="20" r="13.5"/><circle cx="20" cy="20" r="8" fill="#1a62d6" stroke="none"/><path d="M20 1V7M20 33V39M1 20H7M33 20H39"/></svg></div>
        <div class="ctl zoom">
          <div><svg width="28" height="28" viewBox="0 0 28 28" fill="none" stroke="#333" stroke-width="6.4" stroke-linecap="round"><path d="M14 3V25M3 14H25"/></svg></div>
          <div><svg width="28" height="28" viewBox="0 0 28 28" fill="none" stroke="#333" stroke-width="6" stroke-linecap="round"><path d="M3 14H25"/></svg></div>
        </div>
        <div class="info"><svg width="30" height="30" viewBox="0 0 30 30"><circle cx="15" cy="15" r="14.5" fill="#000"/><circle cx="15" cy="8.5" r="2.6" fill="#fff"/><rect x="12.8" y="13" width="4.4" height="11" rx="2.2" fill="#fff"/></svg></div>
        <svg class="mbx" viewBox="0 0 180 52">
          <circle cx="23" cy="25" r="20" fill="#f2faff" stroke="#7ba6bf" stroke-width="3"/>
          <path d="M23 13A12 12 0 0 1 35 25A12 12 0 0 1 23 37H12V25A12 12 0 0 1 23 13Z" fill="#7ba6bf"/>
          <path d="M24 18L26 24L32 26L26 28L24 33L22 28L17 26L22 24Z" fill="#f2faff"/>
          <text class="mbxt" x="50" y="38" textLength="122" lengthAdjust="spacingAndGlyphs">mapbox</text>
        </svg>
      </section>
      <div class="search">${searchIcon("search-icon")}<span>Zoeken</span></div>
      <div class="count"><b>15</b><span>van 15 projecten</span></div>
      <div class="list">
        ${ITEMS.map((it) => html`<article class="card">
          ${this.logo()}
          <div class="body">
            <div class="dist">${it[0]}</div>
            <div class="title">${it[1]}</div>
            <div>${it[2]}</div>
            <div class="foll">${it[3]}</div>
          </div>
          <div class="add"><svg width="40" height="40" viewBox="0 0 40 40" stroke="#595959" stroke-width="6" stroke-linecap="round"><path d="M20 3V37M3 20H37"/></svg></div>
        </article>`)}
        <article class="card"></article>
      </div>
      <nav class="nav">
        <div class="tab"><svg width="48" height="51" viewBox="0 0 48 51" fill="none" stroke="currentColor" stroke-width="3.2" stroke-linejoin="round"><path d="M4 17L20 3Q24 0 28 3L44 17Q46 19 46 23V40Q46 49 37 49H11Q2 49 2 40V23Q2 19 4 17Z"/><path d="M44 0V17M17 49V35Q17 31 21 31H28Q32 31 32 35V49"/></svg></div>
        <div class="tab on">${searchIcon("tab-s")}</div>
        <div class="tab"><svg width="54" height="52" viewBox="0 0 54 52" fill="none" stroke="currentColor" stroke-width="3.2" stroke-linejoin="round" stroke-linecap="round"><path d="M13 2H41Q52 2 52 13V34Q52 44 41 44H34L27 50L21 44H13Q2 44 2 34V13Q2 2 13 2Z"/><path d="M17.5 17V26M27 17V26M36.5 17V26"/></svg></div>
        <div class="tab"><svg width="34" height="49" viewBox="0 0 34 49" fill="none" stroke="currentColor" stroke-width="3.2" stroke-linecap="round"><path d="M17 39C10 30 2 24 2 15A15 14 0 0 1 32 15C32 24 24 30 17 39Z"/><circle cx="17" cy="16" r="5" fill="currentColor" stroke="none"/><path d="M5 38C1 43 5 47.5 17 47.5C29 47.5 33 43 29 38"/></svg></div>
        <div class="tab"><svg width="49" height="49" viewBox="0 0 49 49" fill="none" stroke="currentColor" stroke-width="3.2"><path d=${gearPath()}/><circle cx="24.5" cy="24.5" r="7.5"/></svg></div>
      </nav>
    `;
  }
}
